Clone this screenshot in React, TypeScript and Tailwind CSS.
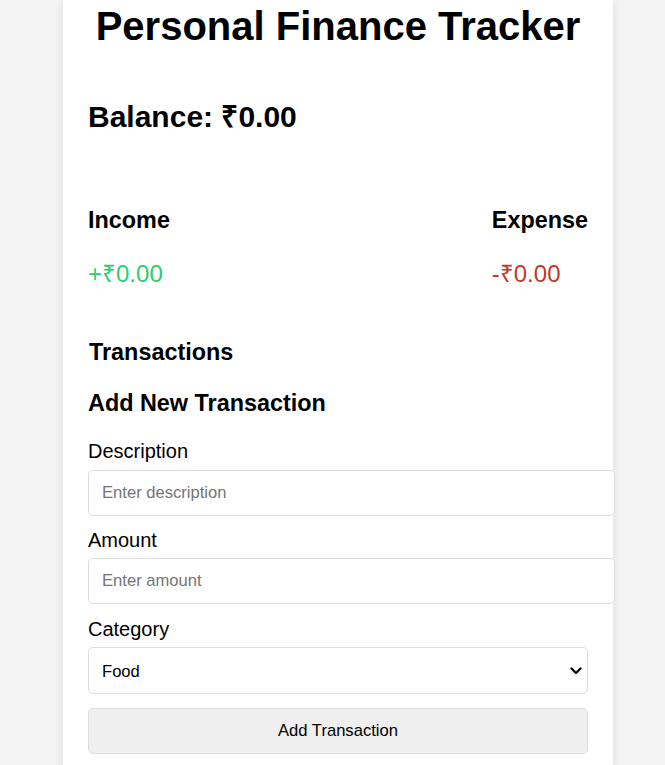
import React from "react";

export default function App() {
  return (
    <div className="min-h-[765px] bg-[#f4f4f4] pl-[63px]" style={{ fontFamily: '"Liberation Sans", Arial, sans-serif' }}>
      <div className="w-[550px] min-h-[765px] bg-white px-[25px] pt-[3px] pb-[20px] shadow-[0_0_10px_rgba(0,0,0,0.1)] text-[20px] text-black">
        <h1 className="text-center text-[40px] font-bold leading-[46px]">Personal Finance Tracker</h1>
        <h2 className="mt-[51px] text-[30px] font-bold leading-[34px]">Balance: ₹0.00</h2>
        <div className="mt-[73px] flex justify-between">
          <div>
            <h3 className="text-[23.4px] font-bold leading-[27px]">Income</h3>
            <p className="mt-[26px] text-[24px] leading-[28px] text-[#2ecc71]">+₹0.00</p>
          </div>
          <div>
            <h3 className="text-[23.4px] font-bold leading-[27px]">Expense</h3>
            <p className="mt-[26px] text-[24px] leading-[28px] text-[#c0392b]">-₹0.00</p>
          </div>
        </div>
        <h3 className="mt-[51px] pl-[1px] text-[23.4px] font-bold leading-[27px]">Transactions</h3>
        <h3 className="mt-[24px] text-[23.4px] font-bold leading-[27px]">Add New Transaction</h3>
        <div className="mt-[23px]">
          <label className="block text-[20px] leading-[23px]">Description</label>
          <input
            type="text"
            placeholder="Enter description"
            className="mt-[7px] block h-[46px] w-[527px] rounded-[5px] border border-[#dddddd] bg-white px-[13px] text-[16.6px] text-black placeholder:text-[#757575] outline-none"
          />
        </div>
        <div className="mt-[13px]">
          <label className="block text-[20px] leading-[23px]">Amount</label>
          <input
            type="number"
            placeholder="Enter amount"
            className="mt-[6px] block h-[46px] w-[527px] rounded-[5px] border border-[#dddddd] bg-white px-[13px] text-[16.6px] text-black placeholder:text-[#757575] outline-none"
          />
        </div>
        <div className="mt-[14px]">
          <label className="block text-[20px] leading-[23px]">Category</label>
          <div className="relative mt-[6px] w-[500px]">
            <select className="block h-[47px] w-full appearance-none rounded-[5px] border border-[#dddddd] bg-white px-[13px] pt-[3px] text-[16.6px] text-black outline-none">
              <option>Food</option>
              <option>Transport</option>
              <option>Entertainment</option>
              <option>Other</option>
            </select>
            <svg
              className="pointer-events-none absolute right-[6px] top-[19px]"
              width="12"
              height="10"
              viewBox="0 0 12 10"
              fill="none"
            >
              <path d="M1.5 2.5 L6 7 L10.5 2.5" stroke="#000" strokeWidth="2.2" strokeLinecap="round" strokeLinejoin="round" />
            </svg>
          </div>
        </div>
        <button className="mt-[14px] block h-[46px] w-[500px] rounded-[5px] border border-[#dddddd] bg-[#efefef] text-[16.6px] text-black">
          Add Transaction
        </button>
      </div>
    </div>
  );
}
